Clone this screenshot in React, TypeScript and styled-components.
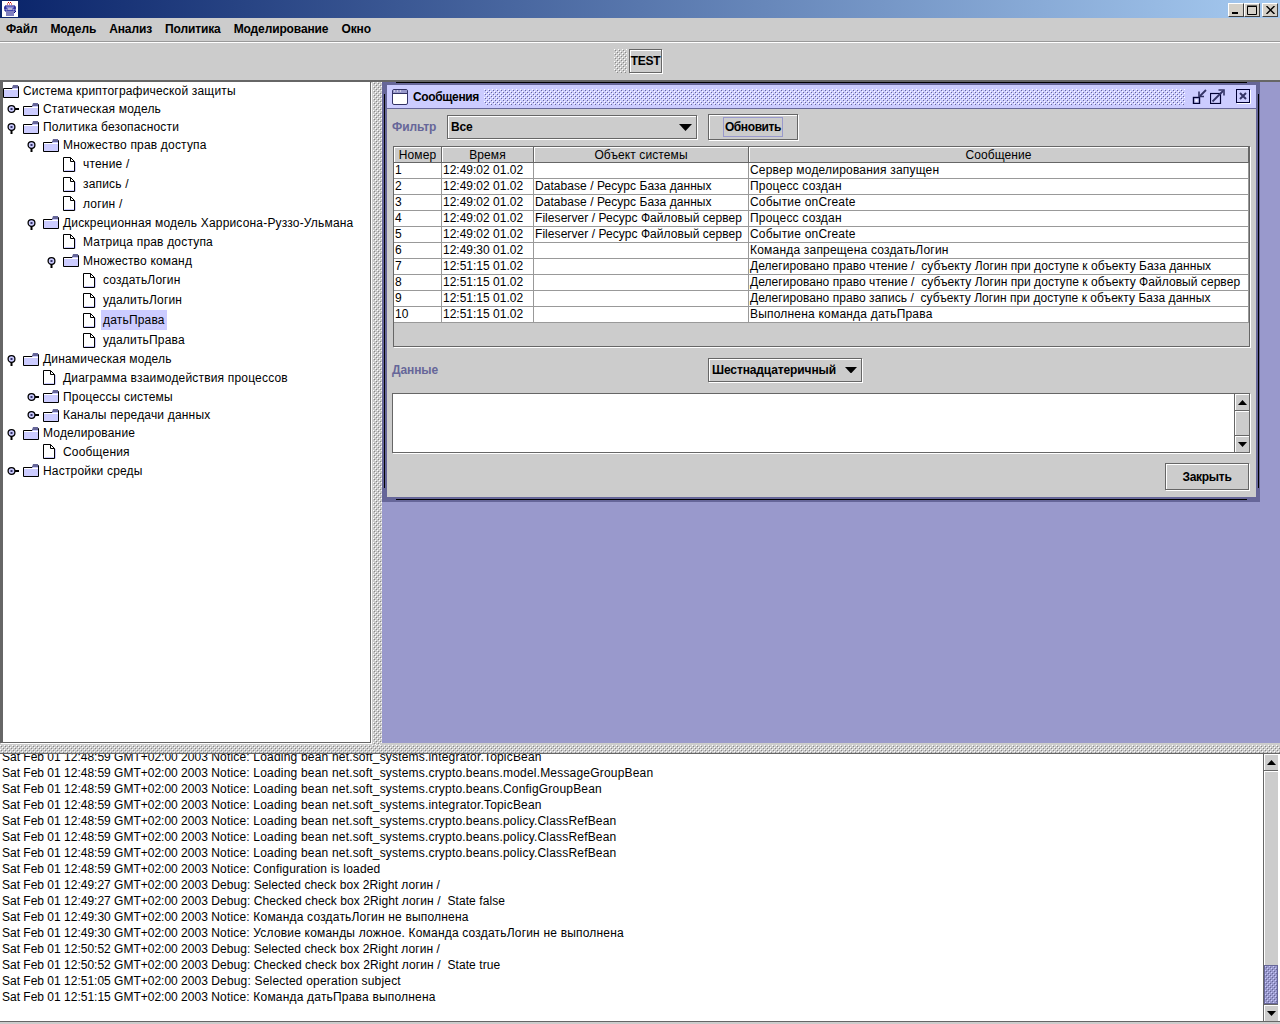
import React from 'react';
import styled, { createGlobalStyle, css } from 'styled-components';

const GlobalStyle = createGlobalStyle`
  html, body {
    margin: 0;
    padding: 0;
    background: #cccccc;
  }
  body {
    font-family: "Liberation Sans", Arial, sans-serif;
    font-size: 12px;
    color: #000000;
    overflow: hidden;
  }
  * {
    box-sizing: border-box;
  }
`;

const dot = (color: string, x: number, y: number) =>
  `conic-gradient(from 270deg at 1px 1px, ${color} 25%, transparent 0) ${x}px ${y}px / 4px 4px`;

const bumps = (light: string, dark: string) => css`
  background: ${dot(light, 0, 0)}, ${dot(light, 2, 2)}, ${dot(dark, 1, 1)}, ${dot(dark, 3, 3)};
`;

const raised = css`
  border: 1px solid #666666;
  box-shadow: inset 1px 1px 0 #ffffff, 1px 1px 0 #ffffff;
`;

const Screen = styled.div`
  width: 1280px;
  height: 1024px;
  display: flex;
  flex-direction: column;
  background: #cccccc;
  overflow: hidden;
`;

const TitleBar = styled.div`
  height: 18px;
  flex: none;
  display: flex;
  align-items: center;
  justify-content: space-between;
  padding: 0 2px;
  background: linear-gradient(to right, #0a246a, #a6caf0);
`;

const WinButtons = styled.div`
  display: flex;
  gap: 2px;
  padding-top: 1px;
`;

const WinGroup = styled.div`
  display: flex;
`;

const WinButton = styled.div`
  width: 16px;
  height: 14px;
  background: #d4d0c8;
  border: 1px solid;
  border-color: #ffffff #404040 #404040 #ffffff;
  display: flex;
  align-items: center;
  justify-content: center;
`;

const MenuBar = styled.div`
  height: 24px;
  flex: none;
  display: flex;
  align-items: center;
  gap: 13px;
  padding: 0 0 2px 6px;
  border-bottom: 1px solid #999999;
  font-weight: bold;
  letter-spacing: -0.12px;
`;

const Toolbar = styled.div`
  height: 38px;
  flex: none;
  display: flex;
  justify-content: center;
  align-items: flex-start;
  padding: 6px 4px 0 0;
  border-top: 1px solid #ffffff;
`;

const Grip = styled.div`
  width: 13px;
  height: 24px;
  margin-right: 2px;
  ${bumps('#ffffff', '#888888')}
`;

const TestButton = styled.div`
  ${raised}
  width: 33px;
  height: 24px;
  display: flex;
  align-items: center;
  justify-content: center;
  font-weight: bold;
  letter-spacing: -0.3px;
`;

const TopSplit = styled.div`
  height: 665px;
  flex: none;
  display: flex;
  border-top: 2px solid #666666;
`;

const TreePane = styled.div`
  width: 371px;
  flex: none;
  margin-bottom: 2px;
  background: #ffffff;
  border-left: 3px solid #666666;
  border-right: 1px solid #666666;
  border-bottom: 1px solid #666666;
  box-shadow: 1px 1px 0 #ffffff;
  overflow: hidden;
`;

const TreeRow = styled.div<{ $h: number; $indent: number }>`
  height: ${p => p.$h}px;
  display: flex;
  align-items: center;
  padding-left: ${p => p.$indent}px;
  white-space: nowrap;
`;

const HandleBox = styled.div`
  width: 16px;
  flex: none;
  display: flex;
`;

const NodeIcon = styled.div`
  width: 20px;
  flex: none;
  display: flex;
`;

const NodeLabel = styled.span<{ $selected?: boolean }>`
  margin-left: ${p => (p.$selected ? '-2px' : '0')};
  padding: ${p => (p.$selected ? '3px 2px' : '0')};
  background: ${p => (p.$selected ? '#ccccff' : 'transparent')};
  letter-spacing: 0.18px;
`;

const VerticalDivider = styled.div`
  width: 9px;
  flex: none;
  margin-left: 2px;
  ${bumps('#ffffff', '#888888')}
`;

const Desktop = styled.div`
  flex: 1;
  min-width: 0;
  margin-bottom: 2px;
  background: #9999cc;
  padding: 0 20px 0 0;
`;

const Frame = styled.div`
  position: relative;
  height: 420px;
  background: #cccccc;
  border-style: solid;
  border-color: #666699;
  border-width: 3px 4px 5px 5px;
  display: flex;
  flex-direction: column;

  &::before {
    content: '';
    position: absolute;
    left: 9px;
    right: 9px;
    top: -3px;
    bottom: -3px;
    border-top: 1px solid #000000;
    border-bottom: 1px solid #000000;
  }

  &::after {
    content: '';
    position: absolute;
    top: 9px;
    bottom: 9px;
    left: -3px;
    right: -3px;
    border-left: 1px solid #000000;
    border-right: 1px solid #000000;
  }
`;

const FrameTitle = styled.div`
  height: 24px;
  flex: none;
  display: flex;
  align-items: center;
  padding: 0 5px;
  background: #ccccff;
  border-bottom: 1px solid #666699;
  font-weight: bold;
`;

const FrameName = styled.span`
  margin-left: 5px;
  margin-right: 5px;
  letter-spacing: -0.35px;
`;

const FrameBumps = styled.div`
  flex: 1;
  height: 16px;
  margin-right: 7px;
  ${bumps('#ffffff', '#666699')}
`;

const FrameIcon = styled.div<{ $gap?: number }>`
  display: flex;
  margin-left: ${p => p.$gap ?? 0}px;
`;

const FrameBody = styled.div`
  flex: 1;
  padding: 5px 5px 0 5px;
  display: flex;
  flex-direction: column;
`;

const FilterRow = styled.div`
  height: 26px;
  flex: none;
  display: flex;
  align-items: center;
`;

const FieldLabel = styled.span<{ $w: number }>`
  width: ${p => p.$w}px;
  flex: none;
  color: #666699;
  font-weight: bold;
  letter-spacing: -0.1px;
`;

const Combo = styled.div<{ $w: number }>`
  ${raised}
  width: ${p => p.$w}px;
  height: 24px;
  flex: none;
  display: flex;
  align-items: center;
  justify-content: space-between;
  padding: 0 4px 0 3px;
  font-weight: bold;
  letter-spacing: -0.12px;
`;

const RefreshButton = styled.div`
  ${raised}
  width: 90px;
  height: 26px;
  margin-left: 11px;
  display: flex;
  align-items: center;
  justify-content: center;
  font-weight: bold;
  letter-spacing: -0.4px;
`;

const FocusMark = styled.span`
  padding: 2px 1px;
  border: 1px solid #9999cc;
`;

const TablePane = styled.div`
  width: 857px;
  height: 201px;
  flex: none;
  margin-top: 6px;
  margin-left: 1px;
  border: 1px solid #666666;
  box-shadow: 1px 1px 0 #ffffff;
`;

const Table = styled.table`
  width: 855px;
  border-collapse: separate;
  border-spacing: 0;
  table-layout: fixed;
  font-size: 12px;
`;

const Th = styled.th`
  height: 16px;
  padding: 1px 0 0 0;
  font-weight: normal;
  text-align: center;
  border-right: 1px solid #666666;
  border-bottom: 1px solid #666666;
  box-shadow: inset 1px 1px 0 #ffffff;
  line-height: 14px;
  letter-spacing: 0.1px;
`;

const Td = styled.td<{ $track: number }>`
  height: 16px;
  padding: 0 0 0 1px;
  background: #ffffff;
  border-right: 1px solid #999999;
  border-bottom: 1px solid #999999;
  white-space: pre;
  overflow: hidden;
  line-height: 15px;
  letter-spacing: ${p => p.$track}px;
`;

const DataRow = styled.div`
  height: 24px;
  flex: none;
  margin-top: 11px;
  display: flex;
  align-items: center;
`;

const DataArea = styled.div`
  width: 858px;
  height: 60px;
  flex: none;
  margin-top: 11px;
  display: flex;
  background: #ffffff;
  border: 1px solid #666666;
  box-shadow: 1px 1px 0 #ffffff;
`;

const AreaBlank = styled.div`
  flex: 1;
`;

const ScrollTrack = styled.div`
  width: 15px;
  flex: none;
  display: flex;
  flex-direction: column;
  background: #cccccc;
  border-left: 1px solid #666666;
`;

const ScrollArrow = styled.div`
  height: 17px;
  flex: none;
  display: flex;
  align-items: center;
  justify-content: center;
  box-shadow: inset 1px 1px 0 #ffffff;
`;

const ScrollTop = styled(ScrollArrow)`
  border-bottom: 1px solid #666666;
`;

const ScrollBottom = styled(ScrollArrow)`
  border-top: 1px solid #666666;
`;

const ScrollFill = styled.div`
  flex: 1;
  box-shadow: inset 1px 1px 0 #ffffff;
`;

const ScrollThumb = styled.div`
  height: 39px;
  flex: none;
  border: 1px solid #666699;
  ${bumps('#ccccff', '#666699')}
  background-color: #9999cc;
`;

const FrameFooter = styled.div`
  flex: 1;
  display: flex;
  justify-content: flex-end;
  align-items: flex-start;
  padding: 10px 2px 0 0;
`;

const CloseButton = styled.div`
  ${raised}
  width: 84px;
  height: 27px;
  display: flex;
  align-items: center;
  justify-content: center;
  font-weight: bold;
  letter-spacing: -0.3px;
`;

const HorizontalDivider = styled.div`
  height: 8px;
  flex: none;
  ${bumps('#ffffff', '#888888')}
`;

const LogPane = styled.div`
  height: 269px;
  flex: none;
  display: flex;
  background: #ffffff;
  border-top: 1px solid #666666;
  border-bottom: 1px solid #666666;
  margin-bottom: 2px;
`;

const LogText = styled.div`
  flex: 1;
  overflow: hidden;
  padding-left: 2px;
`;

const LogLines = styled.div`
  margin-top: -5px;
`;

const LogLine = styled.div`
  height: 16px;
  line-height: 16px;
  white-space: pre;
`;

const LogMessage = styled.span<{ $tight: boolean }>`
  letter-spacing: ${p => (p.$tight ? 0.08 : 0.19)}px;
`;

const LogScroll = styled(ScrollTrack)`
  margin-right: 2px;
`;

function Handle({ open }: { open: boolean }) {
  return (
    <svg width="14" height="14" viewBox="0 0 14 14">
      <circle cx="4.5" cy="7" r="3.4" fill="#ccccff" stroke="#000" strokeWidth="1.3" />
      <rect x="3.5" y="6" width="2" height="2" fill="#333366" />
      {open ? <rect x="3.5" y="10" width="2" height="4" fill="#000" /> : <rect x="8" y="6" width="4" height="2" fill="#000" />}
    </svg>
  );
}

function FolderIcon() {
  return (
    <svg width="16" height="13" viewBox="0 0 16 13">
      <path d="M0.5 3.5H9L11 1.5H15.5V12.5H0.5Z" fill="#ccccff" stroke="#000" />
      <path d="M10 0H15V3H9Z" fill="#666699" />
      <path d="M1 4H15V5H1Z" fill="#ffffff" />
    </svg>
  );
}

function DocIcon() {
  return (
    <svg width="13" height="15" viewBox="0 0 13 15">
      <path d="M0.5 0.5H7.5L11.5 4.5V14.5H0.5Z" fill="#fff" stroke="#000" />
      <path d="M7.5 0.5V4.5H11.5" fill="none" stroke="#000" />
      <path d="M12.5 5V14.5M1.5 13.5H11" stroke="#ccccff" fill="none" />
    </svg>
  );
}

function WindowIcon() {
  return (
    <svg width="16" height="16" viewBox="0 0 16 16">
      <rect x="0.5" y="0.5" width="15" height="15" rx="1.5" fill="#ffffff" stroke="#333366" />
      <rect x="1" y="1" width="14" height="3" fill="#9999cc" />
      <path d="M2 2H3M5 2H6M8 2H9" stroke="#ffffff" />
      <path d="M1 4.5H15" stroke="#333366" />
    </svg>
  );
}

function IconifyIcon() {
  return (
    <svg width="15" height="15" viewBox="0 0 15 15">
      <rect x="1.5" y="8.5" width="6" height="6" fill="#ccccff" stroke="#000033" strokeWidth="1.4" />
      <rect x="3.5" y="10.5" width="2" height="2" fill="#ffffff" />
      <path d="M14 1L8 7" stroke="#333366" strokeWidth="1.8" />
      <path d="M7 2.5V7.5H12" fill="none" stroke="#333366" strokeWidth="1.6" />
    </svg>
  );
}

function MaximizeIcon() {
  return (
    <svg width="15" height="15" viewBox="0 0 15 15">
      <rect x="0.5" y="4.5" width="10" height="10" fill="#ccccff" stroke="#000033" strokeWidth="1.2" />
      <path d="M2.5 12.5L13 2" stroke="#333366" strokeWidth="1.8" />
      <path d="M8.5 1H14V6.5" fill="none" stroke="#333366" strokeWidth="1.6" />
    </svg>
  );
}

function CloseIcon() {
  return (
    <svg width="15" height="15" viewBox="0 0 15 15">
      <rect x="0.5" y="0.5" width="13" height="13" fill="#ccccff" stroke="#000033" />
      <path d="M14.5 1V14.5H1" fill="none" stroke="#ffffff" />
      <path d="M4 4L10 10M10 4L4 10" stroke="#333366" strokeWidth="2" />
    </svg>
  );
}

function AppIcon() {
  return (
    <svg width="16" height="16" viewBox="0 0 16 16">
      <rect width="16" height="16" fill="#ffffff" />
      <path d="M6 1.5H10M5 3H11" stroke="#cc0000" strokeDasharray="1 1" />
      <path d="M3 5H13V10H3Z" fill="#ccccff" stroke="#000080" />
      <path d="M2 7H5M11 7H14M4 12H12L14 10M4 14H12" stroke="#000080" fill="none" />
      <path d="M5 7H11V9H5Z" fill="#ffffff" stroke="#000080" strokeWidth="0.6" />
    </svg>
  );
}

const ArrowDown = ({ w = 13 }: { w?: number }) => (
  <svg width={w} height={w / 2 + 0.5} viewBox="0 0 13 7">
    <path d="M0 0H13L6.5 7Z" fill="#000" />
  </svg>
);

const ArrowUp = () => (
  <svg width="9" height="5" viewBox="0 0 9 5">
    <path d="M0 5H9L4.5 0Z" fill="#000" />
  </svg>
);

type TreeNode = { text: string; h: number; indent: number; kind: 'folder' | 'leaf' | 'root'; open?: boolean; selected?: boolean };

const treeNodes: TreeNode[] = [
  { text: 'Система криптографической защиты', h: 18, indent: 0, kind: 'root' },
  { text: 'Статическая модель', h: 18, indent: 4, kind: 'folder', open: false },
  { text: 'Политика безопасности', h: 18, indent: 4, kind: 'folder', open: true },
  { text: 'Множество прав доступа', h: 18, indent: 24, kind: 'folder', open: true },
  { text: 'чтение /', h: 20, indent: 60, kind: 'leaf' },
  { text: 'запись /', h: 20, indent: 60, kind: 'leaf' },
  { text: 'логин /', h: 19, indent: 60, kind: 'leaf' },
  { text: 'Дискреционная модель Харрисона-Руззо-Ульмана', h: 19, indent: 24, kind: 'folder', open: true },
  { text: 'Матрица прав доступа', h: 19, indent: 60, kind: 'leaf' },
  { text: 'Множество команд', h: 19, indent: 44, kind: 'folder', open: true },
  { text: 'создатьЛогин', h: 20, indent: 80, kind: 'leaf' },
  { text: 'удалитьЛогин', h: 20, indent: 80, kind: 'leaf' },
  { text: 'датьПрава', h: 20, indent: 80, kind: 'leaf', selected: true },
  { text: 'удалитьПрава', h: 20, indent: 80, kind: 'leaf' },
  { text: 'Динамическая модель', h: 18, indent: 4, kind: 'folder', open: true },
  { text: 'Диаграмма взаимодействия процессов', h: 19, indent: 40, kind: 'leaf' },
  { text: 'Процессы системы', h: 19, indent: 24, kind: 'folder', open: false },
  { text: 'Каналы передачи данных', h: 18, indent: 24, kind: 'folder', open: false },
  { text: 'Моделирование', h: 18, indent: 4, kind: 'folder', open: true },
  { text: 'Сообщения', h: 19, indent: 40, kind: 'leaf' },
  { text: 'Настройки среды', h: 19, indent: 4, kind: 'folder', open: false },
];

const menuItems = ['Файл', 'Модель', 'Анализ', 'Политика', 'Моделирование', 'Окно'];

const messages = [
  ['1', '12:49:02 01.02', '', 'Сервер моделирования запущен'],
  ['2', '12:49:02 01.02', 'Database / Ресурс База данных', 'Процесс создан'],
  ['3', '12:49:02 01.02', 'Database / Ресурс База данных', 'Событие onCreate'],
  ['4', '12:49:02 01.02', 'Fileserver / Ресурс Файловый сервер', 'Процесс создан'],
  ['5', '12:49:02 01.02', 'Fileserver / Ресурс Файловый сервер', 'Событие onCreate'],
  ['6', '12:49:30 01.02', '', 'Команда запрещена создатьЛогин'],
  ['7', '12:51:15 01.02', '', 'Делегировано право чтение /  субъекту Логин при доступе к объекту База данных'],
  ['8', '12:51:15 01.02', '', 'Делегировано право чтение /  субъекту Логин при доступе к объекту Файловый сервер'],
  ['9', '12:51:15 01.02', '', 'Делегировано право запись /  субъекту Логин при доступе к объекту База данных'],
  ['10', '12:51:15 01.02', '', 'Выполнена команда датьПрава'],
];

// letter spacing per column, long delegation lines run tighter than the short ones
const cellTrack = (column: number, text: string) => {
  if (column === 2) return 0.06;
  if (column === 3) return text.length > 60 ? 0.05 : 0.2;
  return 0;
};

const logLines = [
  'Notice: Loading bean net.soft_systems.integrator.TopicBean',
  'Notice: Loading bean net.soft_systems.crypto.beans.model.MessageGroupBean',
  'Notice: Loading bean net.soft_systems.crypto.beans.ConfigGroupBean',
  'Notice: Loading bean net.soft_systems.integrator.TopicBean',
  'Notice: Loading bean net.soft_systems.crypto.beans.policy.ClassRefBean',
  'Notice: Loading bean net.soft_systems.crypto.beans.policy.ClassRefBean',
  'Notice: Loading bean net.soft_systems.crypto.beans.policy.ClassRefBean',
  'Notice: Configuration is loaded',
  'Debug: Selected check box 2Right логин /',
  'Debug: Checked check box 2Right логин /  State false',
  'Notice: Команда создатьЛогин не выполнена',
  'Notice: Условие команды ложное. Команда создатьЛогин не выполнена',
  'Debug: Selected check box 2Right логин /',
  'Debug: Checked check box 2Right логин /  State true',
  'Debug: Selected operation subject',
  'Notice: Команда датьПрава выполнена',
];

const logTimes = [
  '12:48:59', '12:48:59', '12:48:59', '12:48:59', '12:48:59', '12:48:59', '12:48:59', '12:48:59',
  '12:49:27', '12:49:27', '12:49:30', '12:49:30', '12:50:52', '12:50:52', '12:51:05', '12:51:15',
];

export default function App() {
  return (
    <Screen>
      <GlobalStyle />
      <TitleBar>
        <AppIcon />
        <WinButtons>
          <WinGroup>
            <WinButton>
              <svg width="8" height="8" viewBox="0 0 8 8"><path d="M0 6H6V8H0Z" fill="#000" /></svg>
            </WinButton>
            <WinButton>
              <svg width="10" height="10" viewBox="0 0 10 10"><path d="M0.5 1.5H9.5V9.5H0.5Z" fill="none" stroke="#000" /><path d="M0 1H10" stroke="#000" /></svg>
            </WinButton>
          </WinGroup>
          <WinButton>
            <svg width="9" height="8" viewBox="0 0 9 8"><path d="M0.5 0L8.5 8M8.5 0L0.5 8" stroke="#000" strokeWidth="1.4" /></svg>
          </WinButton>
        </WinButtons>
      </TitleBar>

      <MenuBar>
        {menuItems.map(item => (
          <span key={item}>{item}</span>
        ))}
      </MenuBar>

      <Toolbar>
        <Grip />
        <TestButton>TEST</TestButton>
      </Toolbar>

      <TopSplit>
        <TreePane>
          {treeNodes.map(node => (
            <TreeRow key={node.text} $h={node.h} $indent={node.indent}>
              {node.kind === 'folder' && (
                <HandleBox>
                  <Handle open={!!node.open} />
                </HandleBox>
              )}
              <NodeIcon>{node.kind === 'leaf' ? <DocIcon /> : <FolderIcon />}</NodeIcon>
              <NodeLabel $selected={node.selected}>{node.text}</NodeLabel>
            </TreeRow>
          ))}
        </TreePane>

        <VerticalDivider />

        <Desktop>
          <Frame>
            <FrameTitle>
              <WindowIcon />
              <FrameName>Сообщения</FrameName>
              <FrameBumps />
              <FrameIcon><IconifyIcon /></FrameIcon>
              <FrameIcon $gap={3}><MaximizeIcon /></FrameIcon>
              <FrameIcon $gap={11}><CloseIcon /></FrameIcon>
            </FrameTitle>
            <FrameBody>
              <FilterRow>
                <FieldLabel $w={55}>Фильтр</FieldLabel>
                <Combo $w={250}>
                  Все
                  <ArrowDown />
                </Combo>
                <RefreshButton>
                  <FocusMark>Обновить</FocusMark>
                </RefreshButton>
              </FilterRow>

              <TablePane>
                <Table>
                  <colgroup>
                    <col style={{ width: 48 }} />
                    <col style={{ width: 92 }} />
                    <col style={{ width: 215 }} />
                    <col />
                  </colgroup>
                  <thead>
                    <tr>
                      <Th>Номер</Th>
                      <Th>Время</Th>
                      <Th>Объект системы</Th>
                      <Th>Сообщение</Th>
                    </tr>
                  </thead>
                  <tbody>
                    {messages.map(row => (
                      <tr key={row[0]}>
                        {row.map((cell, i) => (
                          <Td key={i} $track={cellTrack(i, cell)}>{cell}</Td>
                        ))}
                      </tr>
                    ))}
                  </tbody>
                </Table>
              </TablePane>

              <DataRow>
                <FieldLabel $w={316}>Данные</FieldLabel>
                <Combo $w={154}>
                  Шестнадцатеричный
                  <ArrowDown w={12} />
                </Combo>
              </DataRow>

              <DataArea>
                <AreaBlank />
                <ScrollTrack>
                  <ScrollTop><ArrowUp /></ScrollTop>
                  <ScrollFill />
                  <ScrollBottom><ArrowDown w={9} /></ScrollBottom>
                </ScrollTrack>
              </DataArea>

              <FrameFooter>
                <CloseButton>Закрыть</CloseButton>
              </FrameFooter>
            </FrameBody>
          </Frame>
        </Desktop>
      </TopSplit>

      <HorizontalDivider />

      <LogPane>
        <LogText>
          <LogLines>
            {logLines.map((line, i) => (
              <LogLine key={i}>
                {`Sat Feb 01 ${logTimes[i]} GMT+02:00 2003 `}
                <LogMessage $tight={line.includes('check box')}>{line}</LogMessage>
              </LogLine>
            ))}
          </LogLines>
        </LogText>
        <LogScroll>
          <ScrollTop><ArrowUp /></ScrollTop>
          <ScrollFill />
          <ScrollThumb />
          <ScrollBottom><ArrowDown w={9} /></ScrollBottom>
        </LogScroll>
      </LogPane>
    </Screen>
  );
}
